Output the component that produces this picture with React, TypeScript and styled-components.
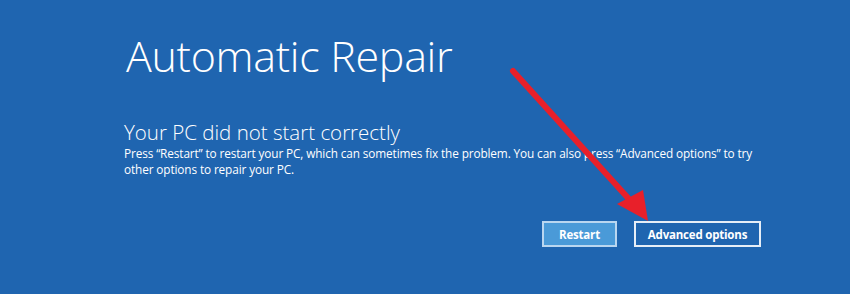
import React from "react";
import styled, { createGlobalStyle } from "styled-components";

const Global = createGlobalStyle`
  html, body { margin: 0; padding: 0; background: #1f65b0; }
  * { box-sizing: border-box; }
`;

const Screen = styled.div`
  position: relative;
  width: 850px;
  height: 294px;
  background: #1f65b0;
  color: #ffffff;
  font-family: "Open Sans", "Noto Sans", sans-serif;
  overflow: hidden;
  display: flex;
  flex-direction: column;
  padding: 28px 89px 0 124px;
`;

const Title = styled.h1`
  margin: 0;
  font-weight: 300;
  font-size: 43px;
  line-height: 56px;
  letter-spacing: -0.3px;
  padding-left: 2px;
`;

const Subtitle = styled.h2`
  margin: 36px 0 0 0;
  font-weight: 300;
  font-size: 20.5px;
  line-height: 24px;
`;

const Message = styled.p`
  margin: 1px 0 0 0;
  font-size: 11.8px;
  line-height: 16px;
  max-width: 630px;
  letter-spacing: -0.12px;
`;

const Actions = styled.div`
  display: flex;
  justify-content: flex-end;
  gap: 17px;
  margin-top: 44px;
`;

const Button = styled.button<{ $primary?: boolean }>`
  height: 26px;
  padding: 0;
  width: ${(p) => (p.$primary ? "75px" : "127px")};
  border: 2px solid ${(p) => (p.$primary ? "#b9d6f0" : "#e6eef7")};
  background: ${(p) => (p.$primary ? "#4a9ad8" : "#1f65b0")};
  color: #ffffff;
  font-family: "Open Sans", "Noto Sans", sans-serif;
  font-weight: 700;
  font-size: 11.5px;
  letter-spacing: -0.2px;
  cursor: pointer;
`;

const Arrow = styled.svg`
  position: absolute;
  left: 0;
  top: 0;
  pointer-events: none;
`;

export default function App() {
  return (
    <>
      <Global />
      <Screen>
        <Title>Automatic Repair</Title>
        <Subtitle>Your PC did not start correctly</Subtitle>
        <Message>
          Press “Restart” to restart your PC, which can sometimes fix the problem. You can also press
          “Advanced options” to try other options to repair your PC.
        </Message>
        <Actions>
          <Button $primary>Restart</Button>
          <Button>Advanced options</Button>
        </Actions>
        <Arrow width="850" height="294" viewBox="0 0 850 294">
          <line x1="513" y1="71" x2="628" y2="198" stroke="#e8202a" strokeWidth="6" strokeLinecap="round" />
          <polygon points="648,221 617,204 643,190" fill="#e8202a" />
        </Arrow>
      </Screen>
    </>
  );
}
